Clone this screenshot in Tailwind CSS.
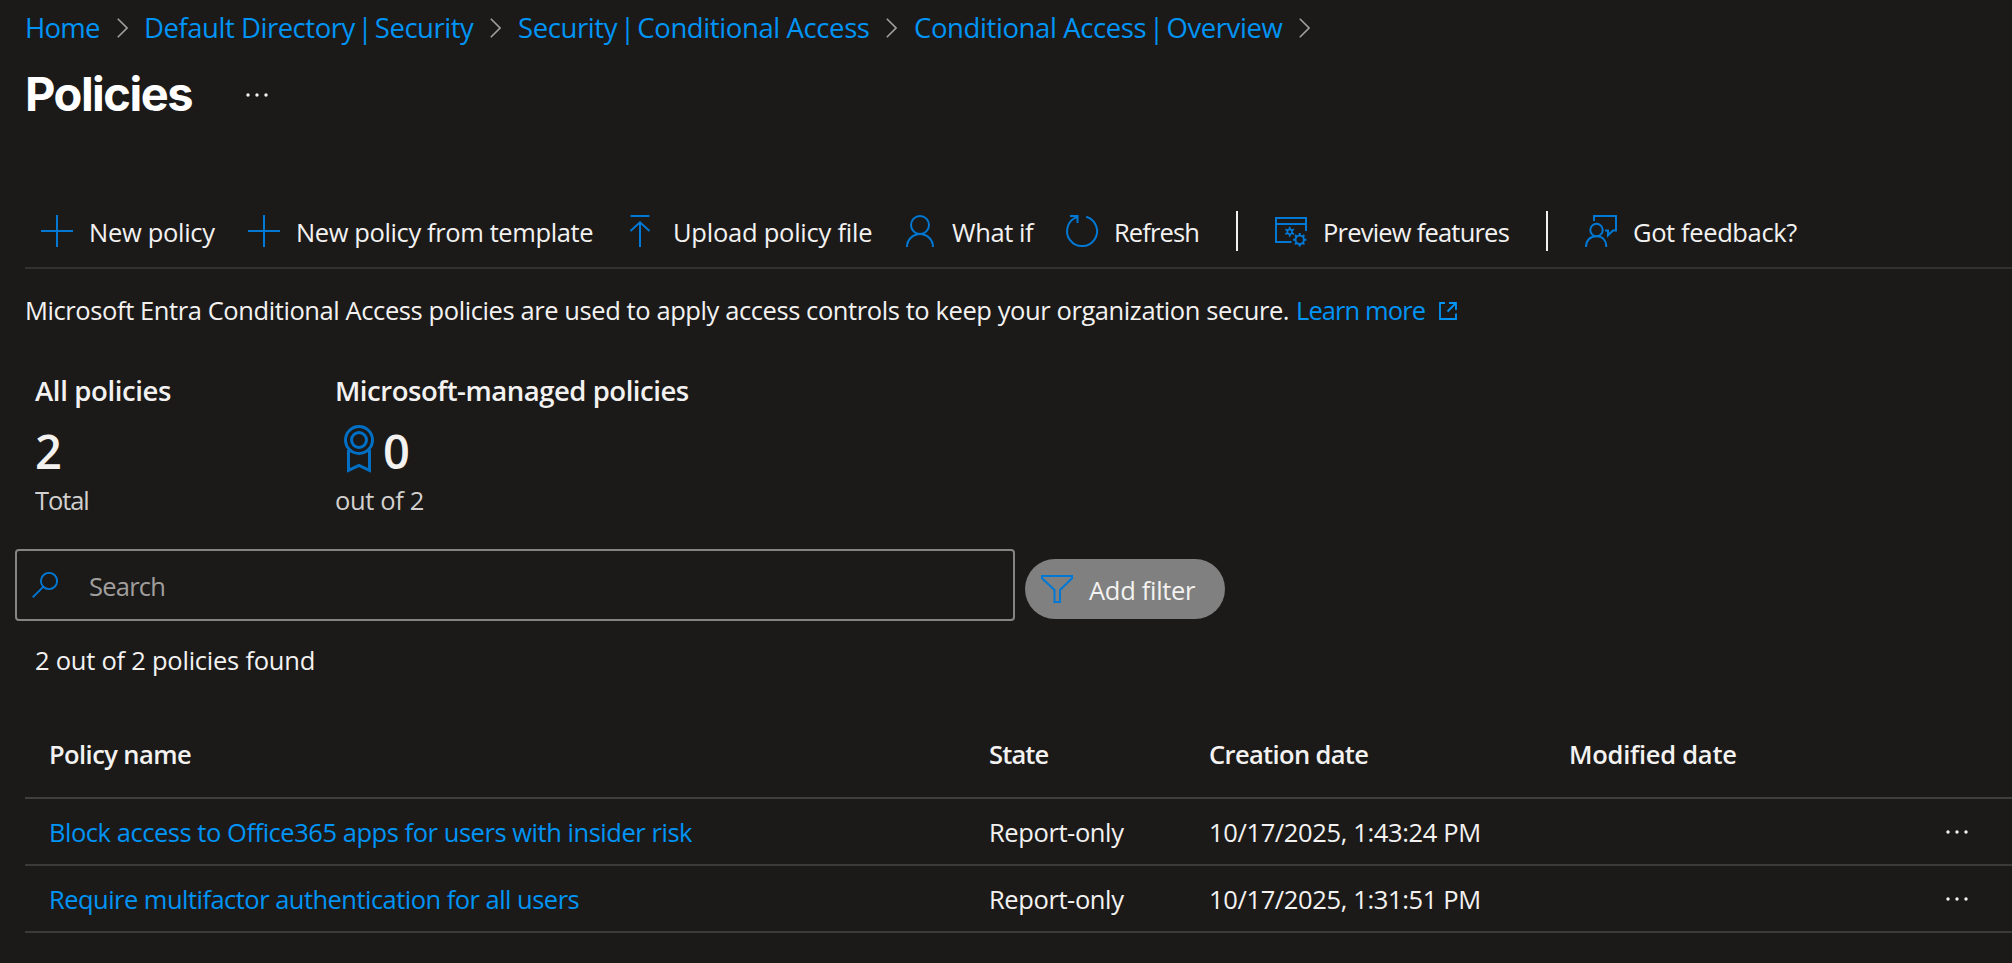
<!DOCTYPE html>
<html lang="en">
<head>
<meta charset="utf-8">
<title>Policies</title>
<script src="https://cdn.jsdelivr.net/npm/@tailwindcss/browser@4"></script>
</head>
<body class="min-h-screen overflow-hidden whitespace-nowrap bg-[#1b1a19] font-['Open_Sans','Noto_Sans',sans-serif] text-[25.5px] leading-9 text-[#f3f2f1]">

<nav class="flex items-center pt-2 pl-[25px] text-[27.5px] leading-10 text-[#0094f5]">
  <a class="w-[92px] tracking-[-0.77px]">Home</a>
  <svg class="mr-4 h-5 w-[11px] shrink-0 text-[#a19f9d]" viewBox="0 0 11 20" fill="none" stroke="currentColor" stroke-width="1.6"><path d="M.8 .8 10 10 .8 19.2"/></svg>
  <a class="w-[346px] tracking-[-0.47px]">Default Directory <span class="-mx-1">|</span> Security</a>
  <svg class="mr-[17px] h-5 w-[11px] shrink-0 text-[#a19f9d]" viewBox="0 0 11 20" fill="none" stroke="currentColor" stroke-width="1.6"><path d="M.8 .8 10 10 .8 19.2"/></svg>
  <a class="w-[368px] tracking-[-0.4px]">Security <span class="-mx-1">|</span> Conditional Access</a>
  <svg class="mr-[17px] h-5 w-[11px] shrink-0 text-[#a19f9d]" viewBox="0 0 11 20" fill="none" stroke="currentColor" stroke-width="1.6"><path d="M.8 .8 10 10 .8 19.2"/></svg>
  <a class="w-[385px] tracking-[-0.4px]">Conditional Access <span class="-mx-1">|</span> Overview</a>
  <svg class="h-5 w-[11px] shrink-0 text-[#a19f9d]" viewBox="0 0 11 20" fill="none" stroke="currentColor" stroke-width="1.6"><path d="M.8 .8 10 10 .8 19.2"/></svg>
</nav>

<header class="mt-4 flex items-center pl-[25px]">
  <h1 class="w-[221px] font-[Inter,sans-serif] text-[47px] leading-[60px] font-bold tracking-[-1.5px] text-white">Policies</h1>
  <svg class="mt-0.5 h-1 w-[22px]" viewBox="0 0 22 4" fill="#f3f2f1"><circle cx="2" cy="2" r="1.7"/><circle cx="11" cy="2" r="1.7"/><circle cx="20" cy="2" r="1.7"/></svg>
</header>

<div class="mt-[71px] ml-[25px] flex h-[74px] items-center border-b-2 border-[#323130] pl-4">
  <div class="flex w-[207px] items-center gap-4">
    <svg class="size-8 shrink-0" viewBox="0 0 32 32" fill="none" stroke="#0078d4" stroke-width="2"><path d="M0 16H32M16 0V32"/></svg>
    <span class="pt-0.5 tracking-[-0.3px]">New policy</span>
  </div>
  <div class="flex w-[376px] items-center gap-4">
    <svg class="size-8 shrink-0" viewBox="0 0 32 32" fill="none" stroke="#0078d4" stroke-width="2"><path d="M0 16H32M16 0V32"/></svg>
    <span class="pt-0.5 tracking-[-0.39px]">New policy from template</span>
  </div>
  <div class="flex w-[280px] items-center gap-[17px]">
    <svg class="size-8 shrink-0" viewBox="0 0 32 32" fill="none" stroke="#0078d4" stroke-width="2"><path d="M6.5 1H25.5M16 7.500V32M6.500 16 16 7.300 25.500 16"/></svg>
    <span class="pt-0.5 tracking-[-0.24px]">Upload policy file</span>
  </div>
  <div class="flex w-[162px] items-center gap-4">
    <svg class="size-8 shrink-0" viewBox="0 0 32 32" fill="none" stroke="#0078d4" stroke-width="2"><circle cx="16" cy="10" r="9"/><path d="M3 32a13 13 0 0 1 26 0"/></svg>
    <span class="pt-0.5 tracking-[-0.4px]">What if</span>
  </div>
  <div class="flex w-[170px] items-center gap-4">
    <svg class="size-8 shrink-0 overflow-visible" viewBox="0 0 32 32" fill="none" stroke="#0078d4" stroke-width="2"><path d="M20.200 1.700A15 15 0 1 1 11.300 1.900M4 1H11.500V8"/></svg>
    <span class="pt-0.5 tracking-[-0.88px]">Refresh</span>
  </div>
  <div class="mr-[37px] h-10 w-0.5 bg-[#f3f2f1]"></div>
  <div class="flex w-[271px] items-center gap-4">
    <svg class="size-8 shrink-0" viewBox="0 0 32 32" fill="none" stroke="#0078d4" stroke-width="2">
      <path d="M31 16V3H1V27H16.500M1 9H31"/>
      <circle cx="14.700" cy="16.700" r="2.300" stroke-width="1.600"/>
      <path stroke-width="1.800" d="M14.700 14.400V11.700M14.700 19V21.700M12.700 15.550 10.400 14.200M16.700 17.850 19 19.200M12.700 17.850 10.400 19.200M16.700 15.550 19 14.200"/>
      <circle cx="24.700" cy="24.700" r="4.200"/>
      <path d="M24.700 20.500V18M24.700 29V31.400M20.500 24.700H18M29 24.700H31.400M21.700 21.700 20 20M27.700 27.700 29.400 29.400M21.700 27.700 20 29.400M27.700 21.700 29.400 20"/>
    </svg>
    <span class="pt-0.5 tracking-[-0.79px]">Preview features</span>
  </div>
  <div class="mr-[37px] h-10 w-0.5 bg-[#f3f2f1]"></div>
  <div class="flex items-center gap-4">
    <svg class="size-8 shrink-0" viewBox="0 0 32 32" fill="none" stroke="#0078d4" stroke-width="2"><circle cx="11.500" cy="15" r="6.200"/><path d="M1 32C1 25.500 5 21.300 11.300 21.300S21.300 25.500 21.300 32M9 6V1H31V15.500H28L23 20.300V15.500H20"/></svg>
    <span class="pt-0.5 tracking-[-0.38px]">Got feedback?</span>
  </div>
</div>

<p class="mt-[23px] flex items-center pl-[25px]">
  <span class="w-[1271px] tracking-[-0.41px]">Microsoft Entra Conditional Access policies are used to apply access controls to keep your organization secure.</span>
  <a class="flex items-center text-[#0094f5]"><span class="w-[143px] tracking-[-0.9px]">Learn more</span>
    <svg class="mt-0.5 size-[18px]" viewBox="0 0 18 18" fill="none" stroke="currentColor" stroke-width="1.800"><path d="M6 1H1V17H17V11.500M10 1H17V8M17 1 8.500 9.500"/></svg></a>
</p>

<section class="mt-[43px] flex pl-[35px]">
  <div class="w-[300px]">
    <h2 class="text-[27.500px] leading-10 font-semibold tracking-[-0.36px]">All policies</h2>
    <div class="mt-2.5 text-[47px] leading-[60px] font-semibold">2</div>
    <div class="mt-px tracking-[-1.1px] text-[#d2d0ce]">Total</div>
  </div>
  <div>
    <h2 class="text-[27.500px] leading-10 font-semibold tracking-[-0.47px]">Microsoft-managed policies</h2>
    <div class="mt-2.5 flex gap-[9px] pl-[9px] text-[47px] leading-[60px] font-semibold">
      <svg class="mt-1 h-12 w-[30px]" viewBox="0 0 30 48" fill="none" stroke="#006fc4" stroke-width="3"><circle cx="15" cy="15" r="13.500"/><circle cx="15" cy="15" r="7.500"/><path d="M4.500 25V45.300L15 40.300 25.500 45.300V25"/></svg>
      <span>0</span>
    </div>
    <div class="mt-px tracking-[-0.35px] text-[#d2d0ce]">out of 2</div>
  </div>
</section>

<div class="mt-[31px] flex items-start gap-2.5 pl-[15px]">
  <div class="flex h-[72px] w-[1000px] items-center rounded border-2 border-[#858482] pl-[15px] text-[#a19f9d]">
    <svg class="mr-[31px] size-[26px]" viewBox="0 0 26 26" fill="none" stroke="#0078d4" stroke-width="1.900"><circle cx="17" cy="9" r="8.100"/><path d="M11.200 14.800.7 25.300"/></svg>
    <span class="pt-0.5 tracking-[-0.78px]">Search</span>
  </div>
  <button class="mt-2.5 flex h-[60px] w-[200px] items-center gap-4 rounded-full bg-[#808080] pl-4">
    <svg class="h-7 w-8 shrink-0" viewBox="0 0 32 28" fill="none" stroke="#0078d4" stroke-width="2"><path d="M1 1H31V3.300L19 15V27H13.500V15L1 3.300Z"/></svg>
    <span class="pt-0.5 tracking-[-0.3px]">Add filter</span>
  </button>
</div>

<p class="mt-[21px] pl-[35px] tracking-[-0.24px]">2 out of 2 policies found</p>

<div class="mt-[33px] ml-[25px]">
  <div class="grid h-[88px] grid-cols-[964px_220px_360px_auto] items-center border-b-2 border-[#403f3e] font-semibold">
    <span class="pl-6 tracking-[-0.58px]">Policy name</span>
    <span class="tracking-[-0.85px]">State</span>
    <span class="tracking-[-0.64px]">Creation date</span>
    <span class="tracking-[-0.26px]">Modified date</span>
  </div>
  <div class="grid h-[67px] grid-cols-[964px_220px_360px_377px_auto] items-center border-b-2 border-[#3b3a39]">
    <a class="pt-px pl-6 tracking-[-0.46px] text-[#0094f5]">Block access to Office365 apps for users with insider risk</a>
    <span class="pt-px tracking-[-0.4px]">Report-only</span>
    <span class="pt-px tracking-[-0.36px]">10/17/2025, 1:43:24 PM</span>
    <span></span>
    <svg class="h-1 w-[22px]" viewBox="0 0 22 4" fill="#f3f2f1"><circle cx="2" cy="2" r="1.700"/><circle cx="11" cy="2" r="1.700"/><circle cx="20" cy="2" r="1.700"/></svg>
  </div>
  <div class="grid h-[67px] grid-cols-[964px_220px_360px_377px_auto] items-center border-b-2 border-[#3b3a39]">
    <a class="pt-px pl-6 tracking-[-0.53px] text-[#0094f5]">Require multifactor authentication for all users</a>
    <span class="pt-px tracking-[-0.4px]">Report-only</span>
    <span class="pt-px tracking-[-0.36px]">10/17/2025, 1:31:51 PM</span>
    <span></span>
    <svg class="h-1 w-[22px]" viewBox="0 0 22 4" fill="#f3f2f1"><circle cx="2" cy="2" r="1.700"/><circle cx="11" cy="2" r="1.700"/><circle cx="20" cy="2" r="1.700"/></svg>
  </div>
</div>
</body>
</html>
